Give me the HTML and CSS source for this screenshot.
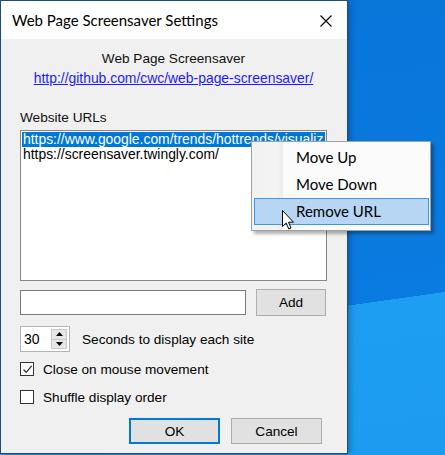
FILE: index.html
```html
<!DOCTYPE html>
<html>
<head>
<meta charset="utf-8">
<link rel="stylesheet" href="styles.css">
</head>
<body>
<div class="desktop">
  <div class="window">
    <div class="titlebar">
      <span class="title">Web Page Screensaver Settings</span>
      <svg class="close" width="12" height="12" viewBox="0 0 12 12"><path d="M0.5 0.5 L11.5 11.5 M11.5 0.5 L0.5 11.5" stroke="#000" stroke-width="1.1" fill="none"/></svg>
    </div>
    <div class="client">
      <div class="appname">Web Page Screensaver</div>
      <a class="link" href="#">http://github.com/cwc/web-page-screensaver/</a>
      <div class="label">Website URLs</div>
      <div class="listbox">
        <div class="item sel">https://www.google.com/trends/hottrends/visualiz</div>
        <div class="item">https://screensaver.twingly.com/</div>
      </div>
      <div class="addrow">
        <div class="textbox"></div>
        <div class="btn add">Add</div>
      </div>
      <div class="secrow">
        <div class="numeric">
          <span class="num">30</span>
          <div class="spin">
            <div class="spinbtn"><svg width="7" height="4" viewBox="0 0 7 4"><path d="M3.5 0 L7 4 L0 4 Z" fill="#000"/></svg></div>
            <div class="spinbtn"><svg width="7" height="4" viewBox="0 0 7 4"><path d="M0 0 L7 0 L3.5 4 Z" fill="#000"/></svg></div>
          </div>
        </div>
        <span class="sectext">Seconds to display each site</span>
      </div>
      <div class="check first">
        <span class="box"><svg width="11" height="11" viewBox="0 0 11 11"><path d="M1.5 5.5 L4.2 8.3 L9.7 1.8" stroke="#333" stroke-width="1.3" fill="none"/></svg></span>
        <span>Close on mouse movement</span>
      </div>
      <div class="check second">
        <span class="box"></span>
        <span>Shuffle display order</span>
      </div>
      <div class="buttons">
        <div class="btn ok">OK</div>
        <div class="btn cancel">Cancel</div>
      </div>
    </div>
  </div>
  <div class="menu">
    <div class="gutter"></div>
    <div class="mitem">Move Up</div>
    <div class="mitem">Move Down</div>
    <div class="mitem hot">Remove URL</div>
  </div>
  <svg class="cursor" width="13" height="20" viewBox="0 0 13 20"><path d="M0.5 0.5 L0.5 16.5 L4.2 13 L6.8 19 L9 18 L6.5 12.2 L11.5 12.2 Z" fill="#fff" stroke="#000" stroke-width="1" stroke-linejoin="miter"/></svg>
</div>
</body>
</html>
```
FILE: styles.css
```css
html, body {
  margin: 0;
  padding: 0;
}
.desktop {
  position: relative;
  width: 445px;
  height: 455px;
  overflow: hidden;
  background: linear-gradient(172deg, #0874d8 0%, #0a7be0 68.5%, #1e9ef2 68.5%, #1c9bf0 100%);
  font-family: "Liberation Sans", Arial, sans-serif;
  color: #000;
}
.window {
  width: 346px;
  height: 452px;
  border: 1px solid #1b4d78;
  background: #f0f0f0;
  display: flex;
  flex-direction: column;
  box-shadow: 2px 0 6px rgba(0, 30, 70, 0.35);
}
.titlebar {
  height: 38px;
  background: #fff;
  display: flex;
  align-items: center;
  justify-content: space-between;
  padding: 0 15px 0 11px;
  flex: none;
}
.title {
  font-family: Lato, "Noto Sans", sans-serif;
  font-size: 15px;
  color: #000;
  margin-top: -1px;
}
.close {
  display: block;
  margin-top: 1px;
}
.client {
  flex: 1;
  padding: 0 20px 0 19px;
  display: flex;
  flex-direction: column;
  font-size: 13.6px;
}
.appname {
  text-align: center;
  margin-top: 12px;
  height: 16px;
  line-height: 16px;
  color: #111;
}
.link {
  align-self: center;
  color: #1a1aff;
  text-decoration: underline;
  margin-top: 3px;
  height: 16px;
  line-height: 16px;
  font-size: 13.9px;
}
.label {
  margin-top: 24px;
  height: 16px;
  line-height: 16px;
  color: #111;
}
.listbox {
  margin-top: 4px;
  height: 147px;
  border: 1px solid #828790;
  background: #fff;
  padding: 1px;
  overflow: hidden;
}
.item {
  height: 15px;
  line-height: 15px;
  white-space: nowrap;
  overflow: hidden;
  padding-left: 1px;
  color: #000;
  font-size: 13.9px;
}
.item.sel {
  background: #0078d7;
  color: #fff;
}
.addrow {
  display: flex;
  align-items: center;
  margin-top: 8px;
  gap: 10px;
}
.textbox {
  width: 224px;
  height: 23px;
  border: 1px solid #7a7a7a;
  background: #fff;
}
.btn {
  background: #e1e1e1;
  border: 1px solid #adadad;
  display: flex;
  align-items: center;
  justify-content: center;
  color: #000;
  box-sizing: border-box;
}
.add {
  width: 70px;
  height: 27px;
}
.secrow {
  display: flex;
  align-items: center;
  margin-top: 10px;
}
.numeric {
  width: 44px;
  height: 24px;
  border: 1px solid #b4b4b4;
  background: #fff;
  display: flex;
  align-items: center;
  justify-content: space-between;
  padding: 0 2px 0 2px;
  margin-right: 12px;
}
.num {
  font-size: 14px;
  margin-left: 1px;
}
.spin {
  width: 16px;
  height: 20px;
  display: flex;
  flex-direction: column;
  border: 1px solid #c8c8c8;
  box-sizing: border-box;
  background: #e6e6e6;
}
.spinbtn {
  flex: 1;
  display: flex;
  align-items: center;
  justify-content: center;
}
.spinbtn:first-child {
  border-bottom: 1px solid #c8c8c8;
}
.spinbtn svg {
  display: block;
}
.check {
  display: flex;
  align-items: center;
  gap: 9px;
  height: 16px;
}
.check.first {
  margin-top: 9px;
}
.check.second {
  margin-top: 12px;
}
.box {
  width: 12px;
  height: 12px;
  border: 1px solid #333;
  background: #fff;
  display: flex;
  align-items: center;
  justify-content: center;
}
.box svg {
  display: block;
}
.buttons {
  display: flex;
  justify-content: flex-end;
  gap: 11px;
  margin-top: 13px;
  padding-right: 5px;
}
.ok, .cancel {
  width: 91px;
  height: 26px;
}
.ok {
  border: 2px solid #0078d7;
}
.menu {
  position: absolute;
  left: 251px;
  top: 141px;
  width: 175px;
  height: 84px;
  padding: 2px 1px 2px 2px;
  background: #fbfbfb;
  border: 1px solid #a0a0a0;
  box-shadow: 3px 3px 3px rgba(0, 0, 0, 0.3);
  font-family: Lato, "Noto Sans", sans-serif;
  font-size: 15px;
  display: flex;
  flex-direction: column;
}
.gutter {
  position: absolute;
  left: 0;
  top: 0;
  bottom: 0;
  width: 31px;
  background: linear-gradient(to right, #f1f1f1, #f4f4f4 80%, #eaeaea);
}
.mitem {
  position: relative;
  height: 27px;
  line-height: 27px;
  padding-left: 42px;
  color: #000;
  box-sizing: border-box;
}
.mitem.hot {
  background: #b6d6f4;
  border: 1px solid #3c98e6;
  padding-left: 41px;
  line-height: 25px;
}
.cursor {
  position: absolute;
  left: 282px;
  top: 210px;
}
```
